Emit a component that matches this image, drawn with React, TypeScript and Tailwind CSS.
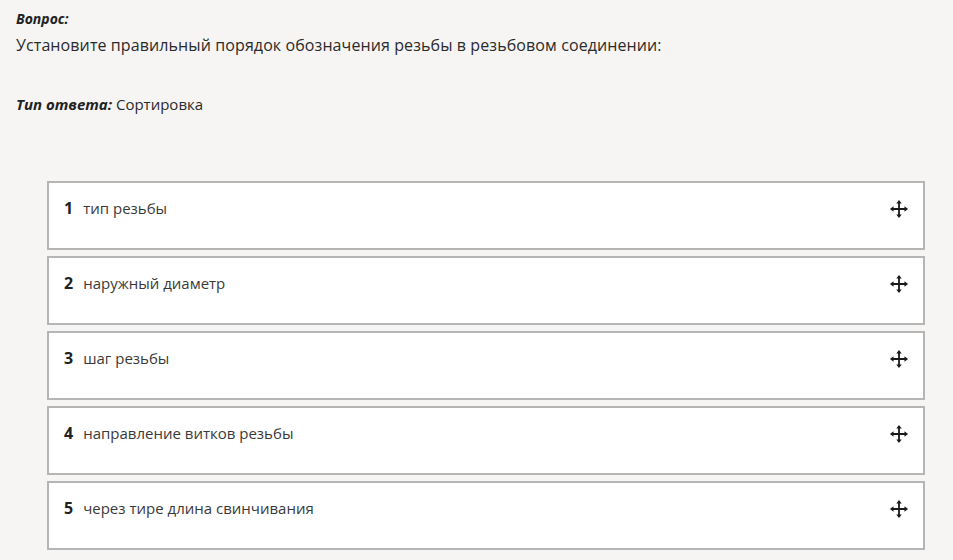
import React from 'react';

const items = [
  'тип резьбы',
  'наружный диаметр',
  'шаг резьбы',
  'направление витков резьбы',
  'через тире длина свинчивания',
];

function MoveIcon() {
  return (
    <svg width="20" height="20" viewBox="0 0 22 22" className="text-[#1a1a1a]">
      <path d="M11 3v16M3 11h16" stroke="currentColor" strokeWidth="2" />
      <path d="M11 1l-3 4h6zM11 21l-3-4h6zM1 11l4-3v6zM21 11l-4-3v6z" fill="currentColor" />
    </svg>
  );
}

export default function App() {
  return (
    <div className="min-h-[560px] bg-[#f6f5f4] font-['Open_Sans',sans-serif] text-[#2b2b2b]">
      <div className="px-4 pt-[9px]">
        <div className="text-[14px] font-bold italic leading-[20px] text-[#222]">Вопрос:</div>
        <div className="text-[16px] leading-[32px] tracking-[0.1px]">
          Установите правильный порядок обозначения резьбы в резьбовом соединении:
        </div>
        <div className="mt-[32px] text-[15px] leading-[22px]">
          <span className="font-bold italic text-[#222]">Тип ответа:</span> Сортировка
        </div>
      </div>

      <div className="mt-[66px] flex flex-col gap-[6px] pl-[47px] pr-[28px]">
        {items.map((text, i) => (
          <div
            key={i}
            className="flex h-[69px] items-start justify-between border-2 border-[#b5b5b5] bg-white pl-[15px] pr-[14px] pt-[13px]"
          >
            <div className="flex items-baseline gap-[10px]">
              <span className="text-[16px] font-bold text-[#222]">{i + 1}</span>
              <span className="text-[15px] text-[#3a3a3a]">{text}</span>
            </div>
            <div className="pt-[3px]">
              <MoveIcon />
            </div>
          </div>
        ))}
      </div>
    </div>
  );
}
